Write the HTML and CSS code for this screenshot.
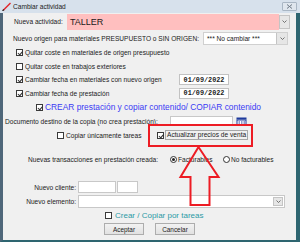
FILE: index.html
```html
<!DOCTYPE html>
<html lang="es">
<head>
<meta charset="utf-8">
<title>Cambiar actividad</title>
<link rel="stylesheet" href="styles.css">
</head>
<body>
<div class="win">
  <header class="titlebar">
    <svg class="appicon" viewBox="0 0 9 9" width="9" height="9"><line x1="1" y1="8.5" x2="8.5" y2="1" stroke="#e3262b" stroke-width="1.4"/><line x1="0.5" y1="9" x2="2" y2="7.5" stroke="#333" stroke-width="1.2"/></svg>
    <span class="title">Cambiar actividad</span>
    <span class="close"><svg viewBox="0 0 7 5" width="7" height="5"><path d="M1 0.5 L6 4.5 M6 0.5 L1 4.5" stroke="#6f7a86" stroke-width="1" fill="none"/></svg></span>
  </header>
  <main class="client">
    <div class="row r-act">
      <span class="lbl-act">Nueva actividad:</span>
      <div class="combo pink"><span class="combo-val big">TALLER</span><span class="ddbtn"><svg viewBox="0 0 5 3" width="5" height="3"><path d="M0.5 0.5 L2.5 2.5 L4.5 0.5" stroke="#555" fill="none" stroke-width="0.8"/></svg></span></div>
    </div>
    <div class="row r-org">
      <span class="lbl-org">Nuevo origen para materiales PRESUPUESTO o SIN ORIGEN:</span>
      <div class="combo sel-org"><span class="combo-val">*** No cambiar ***</span><span class="ddbtn"><svg viewBox="0 0 5 3" width="5" height="3"><path d="M0.5 0.5 L2.5 2.5 L4.5 0.5" stroke="#555" fill="none" stroke-width="0.8"/></svg></span></div>
    </div>
    <div class="row chk r-c1"><span class="cb on"></span><span class="ctext">Quitar coste en materiales de origen presupuesto</span></div>
    <div class="row chk r-c2"><span class="cb"></span><span class="ctext">Quitar coste en trabajos exteriores</span></div>
    <div class="row chk r-c3"><span class="cb on"></span><span class="ctext wlbl">Cambiar fecha en materiales con nuevo origen</span><span class="date">01/09/2022</span></div>
    <div class="row chk r-c4"><span class="cb on"></span><span class="ctext wlbl">Cambiar fecha de prestación</span><span class="date">01/09/2022</span></div>
    <div class="row r-crear"><span class="cb on"></span><span class="crear-text">CREAR prestación y copiar contenido/ COPIAR contenido</span></div>
    <div class="row r-doc">
      <span class="lbl-doc">Documento destino de la copia (no crea prestación):</span>
      <span class="tinput doc-in"></span>
      <svg class="docicon" viewBox="0 0 11 9" width="11" height="9"><rect x="0.5" y="0.5" width="10" height="2" fill="#1e3a9c"/><rect x="1" y="3" width="9" height="5.5" fill="#fff" stroke="#1e3a9c" stroke-width="1"/><rect x="2.5" y="4.5" width="1.5" height="1" fill="#1e3a9c"/><rect x="5" y="4.5" width="1.5" height="1" fill="#1e3a9c"/><rect x="7.5" y="4.5" width="1.5" height="1" fill="#1e3a9c"/><rect x="2.5" y="6.5" width="1.5" height="1" fill="#1e3a9c"/><rect x="5" y="6.5" width="1.5" height="1" fill="#1e3a9c"/><rect x="7.5" y="6.5" width="1.5" height="1" fill="#1e3a9c"/></svg>
    </div>
    <div class="row r-copiar">
      <span class="cb"></span><span class="ctext lbl-copiar">Copiar únicamente tareas</span>
      <span class="cb on"></span><span class="ctext focus">Actualizar precios de venta</span>
    </div>
    <div class="row r-trans">
      <span class="lbl-trans">Nuevas transacciones en prestación creada:</span>
      <span class="rb on"></span><span class="rtext fact">Facturables</span>
      <span class="rb"></span><span class="rtext">No facturables</span>
    </div>
    <div class="row r-cli">
      <span class="lbl-r">Nuevo cliente:</span>
      <span class="tinput cli1"></span><span class="tinput cli2"></span>
    </div>
    <div class="row r-ele">
      <span class="lbl-r">Nuevo elemento:</span>
      <div class="combo sel-ele"><span class="combo-val"></span><span class="ddbtn"><svg viewBox="0 0 5 3" width="5" height="3"><path d="M0.5 0.5 L2.5 2.5 L4.5 0.5" stroke="#555" fill="none" stroke-width="0.8"/></svg></span></div>
    </div>
    <div class="row r-crear2"><span class="cb"></span><span class="crear2-text">Crear / Copiar por tareas</span></div>
    <div class="row r-btns">
      <span class="btn">Aceptar</span>
      <span class="btn">Cancelar</span>
    </div>
  </main>
  <div class="callout"></div>
  <svg class="arrow" viewBox="0 0 300 242" width="300" height="242"><polygon points="198.5,147 180.5,177 190.5,177 190.5,205 209.5,205 209.5,177 218.5,177" fill="none" stroke="#ed1c24" stroke-width="2" stroke-linejoin="miter"/></svg>
</div>
</body>
</html>
```

FILE: styles.css
```css
* { box-sizing: border-box; margin: 0; padding: 0; }
html, body { width: 300px; height: 242px; overflow: hidden; }
body {
  font-family: "Liberation Sans", Arial, sans-serif;
  font-size: 6.6px;
  color: #1b1b1b;
  background: #3d5a6e;
}
.win { position: relative; width: 300px; height: 242px; display: flex; flex-direction: column; }

.titlebar {
  height: 13px; flex: none;
  background: #d7e1ec;
  display: flex; align-items: center;
  padding-left: 2px;
}
.appicon { flex: none; }
.title { margin-left: 2px; color: #222; }
.close {
  margin-left: auto; margin-right: 3px;
  width: 15px; height: 9px;
  background: #dfe6ee; border: 1px solid #a9b6c4; border-radius: 1px;
  display: flex; align-items: center; justify-content: center;
}

.client {
  flex: 1;
  background: #f0f0f0;
  border-left: 3px solid #4f677a;
  border-right: 4px solid #2e6570;
  border-bottom: 2px solid #2e6570;
  display: flex; flex-direction: column;
}
.row { display: flex; align-items: center; flex: none; white-space: nowrap; }

/* Row 1 */
.r-act { height: 17px; padding-left: 11px; }
.lbl-act { width: 53px; }
.combo { display: flex; height: 100%; }
.combo-val { flex: 1; display: flex; align-items: center; padding-left: 3px; }
.ddbtn {
  flex: none; width: 11px;
  background: #e6e6e6; border: 1px solid #c4c4c4;
  display: flex; align-items: center; justify-content: center;
}
.pink { width: 223px; height: 16px; }
.pink .combo-val { background: #ffbfbf; }
.pink .ddbtn { margin: 1px 0; }
.big { font-size: 9px; color: #1a1a1a; }

/* Row 2 */
.r-org { height: 13px; margin-top: 2px; padding-left: 10px; }
.lbl-org { width: 190px; }
.sel-org { width: 85px; height: 13px; background: #fff; border: 1px solid #d0d0d0; }
.sel-org .ddbtn { border-width: 0 0 0 1px; }

/* checkboxes */
.cb {
  flex: none; width: 7px; height: 7px;
  background: #fff; border: 1px solid #3a3a3a;
  position: relative;
}
.cb.on::after {
  content: ""; position: absolute;
  left: 1.6px; top: 0;
  width: 1.6px; height: 3.6px;
  border: solid #333; border-width: 0 1px 1px 0;
  transform: rotate(40deg);
}
.ctext { margin-left: 2px; }
.chk { padding-left: 13px; }
.r-c1 { height: 14px; }
.r-c2 { height: 14px; }
.r-c3 { height: 13px; }
.r-c4 { height: 14px; }
.wlbl { width: 154px; }
.date {
  width: 50px; height: 11px;
  background: #fff; border: 1px solid #c2c2c2;
  font-family: "Liberation Mono", "Courier New", monospace;
  font-weight: bold; font-size: 6.8px;
  display: flex; align-items: center; justify-content: center;
}

.r-crear { height: 14px; padding-left: 33px; }
.crear-text { margin-left: 2px; font-size: 8.4px; color: #3b3bf4; }

.r-doc { height: 14px; padding-left: 2px; }
.lbl-doc { width: 165px; }
.tinput { background: #fff; border: 1px solid #c8c8c8; }
.doc-in { width: 63px; height: 10px; }
.docicon { margin-left: 3px; flex: none; }

.r-copiar { height: 14px; padding-left: 54px; }
.lbl-copiar { width: 91px; margin-left: 2px; }
.focus { margin-left: 1px; border: 1px solid #a8a8a8; padding: 0 1px; line-height: 8px; }

.r-trans { height: 14px; margin-top: 10px; padding-left: 25px; }
.lbl-trans { width: 142px; }
.rb {
  flex: none; width: 7px; height: 7px; border-radius: 50%;
  border: 1px solid #333; background: #fff;
  display: flex; align-items: center; justify-content: center;
}
.rb.on::after { content: ""; width: 3px; height: 3px; border-radius: 50%; background: #222; }
.rtext { margin-left: 1px; }
.fact { width: 45px; }

.lbl-r { width: 73px; text-align: right; margin-right: 2px; }
.r-cli { height: 12px; margin-top: 15px; }
.cli1 { width: 38px; height: 12px; }
.cli2 { width: 21px; height: 12px; margin-left: 1px; }
.r-ele { height: 13px; margin-top: 2px; }
.sel-ele { width: 207px; height: 13px; background: #fff; border: 1px solid #c8c8c8; }
.sel-ele .ddbtn { margin: 1px; width: 10px; }

.r-crear2 { height: 12px; margin-top: 1px; padding-left: 102px; }
.crear2-text { margin-left: 3px; font-size: 8px; color: #2b9aa5; }

.r-btns { height: 12px; margin-top: 2px; padding-left: 101px; gap: 11px; }
.btn {
  width: 40px; height: 12px;
  background: linear-gradient(#f2f2f2, #e1e1e1);
  border: 1px solid #adadad;
  display: flex; align-items: center; justify-content: center;
  font-size: 6.4px;
}

.callout {
  position: absolute; left: 148px; top: 124px;
  width: 105px; height: 23px;
  border: 2px solid #ed1c24;
}
.arrow { position: absolute; left: 0; top: 0; pointer-events: none; }
```
